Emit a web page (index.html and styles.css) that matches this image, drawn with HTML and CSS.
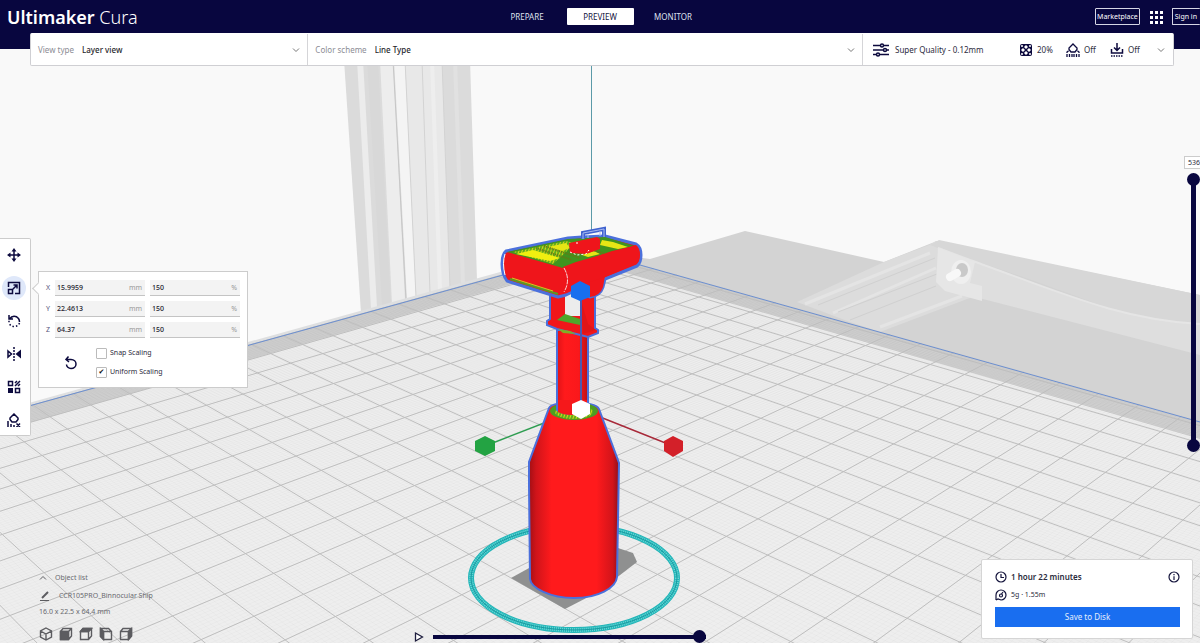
FILE: index.html
```html
<!DOCTYPE html>
<html lang="en">
<head>
<meta charset="utf-8">
<title>Ultimaker Cura</title>
<link rel="stylesheet" href="styles.css">
</head>
<body>
<div class="app">
  <svg class="scene" viewBox="0 0 1200 643" preserveAspectRatio="xMidYMid slice" aria-hidden="true">
    <defs>
      <linearGradient id="bottle" x1="0" x2="1" y1="0" y2="0">
        <stop offset="0" stop-color="#a30f14"/><stop offset=".08" stop-color="#d0141a"/><stop offset=".25" stop-color="#ff1a1c"/>
        <stop offset=".75" stop-color="#ff1a1c"/><stop offset=".93" stop-color="#d2141a"/><stop offset="1" stop-color="#8e0f1c"/>
      </linearGradient>
      <linearGradient id="neck" x1="0" x2="1" y1="0" y2="0">
        <stop offset="0" stop-color="#e01318"/><stop offset=".25" stop-color="#ff1a1c"/><stop offset=".7" stop-color="#fa181b"/><stop offset="1" stop-color="#b81018"/>
      </linearGradient>
      <pattern id="weave" width="3" height="3" patternUnits="userSpaceOnUse" patternTransform="rotate(20)">
        <rect width="3" height="3" fill="#5fae1c"/><rect width="1" height="3" fill="#d6d61c"/>
      </pattern>
    </defs>
    <rect width="1200" height="643" fill="#f9f9f9"/>
    <!-- rear column -->
    <path fill="#dbdbdb" d="M344 60L361 313L477 280L470 60Z"/>
    <path fill="#ececec" d="M357 60L371 309L377 307L363 60Z"/>
    <path fill="#d8d8d8" d="M367 60L382 306L391 304L378 60Z"/>
    <path fill="#ededed" d="M380 60L392 304L405 300L393 60Z"/>
    <path fill="#f4f4f4" d="M394 60L407 300L416 297L405 60Z"/>
    <path fill="#e8e8e8" d="M405 60L416 297L450 288L442 60Z"/>
    <path fill="#eeeeee" d="M430 60L438 291L442 290L434 60Z"/>
    <path fill="#e1e1e1" d="M453 60L461 285L465 284L457 60Z"/>
    <path fill="none" stroke="#c6c6c6" d="M393 60L406 300"/>
    <path fill="none" stroke="#d3d3d3" d="M442 60L450 288M405 60L416 297M422 60L430 293"/>
    <!-- rear base and rail -->
    <path fill="#d3d3d3" d="M590 251L650 259L745 231L884 262L937 241L1200 295V430Z"/>
    <path fill="#dcdcdc" d="M797 302L884 262L929 245L936 241L975 296L880 332L850 322Z"/>
    <path fill="#d7d7d7" d="M930 245L939 240L1200 295V324C1150 320 1130 316 1100 305C1060 290 1000 268 970 260Z"/>
    <path fill="#dedede" d="M938 247L970 260C1060 292 1120 320 1200 324V355L975 297L938 282Z"/>
    <path fill="none" stroke="#e4e4e4" stroke-width="3" d="M805 304L930 253M833 313L936 268M880 327L962 296"/>
    <path fill="none" stroke="#e5e5e5" stroke-width="2" d="M938 248L970 260C1060 292 1120 320 1200 324"/>
    <path fill="none" stroke="#d0d0d0" d="M818 305L935 258M838 312L937 274M850 320L936 286"/>
    <path fill="#e6e6e6" d="M938 248L975 262L970 283L982 286V301L945 291L936 282Z"/>
    <ellipse cx="961" cy="272" rx="10" ry="12" fill="#efefef"/>
    <ellipse cx="962" cy="270" rx="6" ry="7" fill="#c9c9c9"/>
    <path stroke="#f8f8f8" stroke-width="8" stroke-linecap="round" d="M950 277L957 273"/>
    <!-- build plate -->
    <path fill="#dedfe0" d="M0 411L590 247V251L0 415Z"/>
    <path fill="#cfcfcf" d="M0 414L590 251L1200 422V700H0Z"/>
    <path fill="#eeeeee" d="M0 431L588 262L1200 439V700H0Z"/>
    <path id="fine" class="fine"/>
    <path id="grid" class="grid"/>
    <path fill="none" stroke="#6c8fd0" d="M0 414L590 251L1200 422"/>
    <path fill="none" stroke="#5b9aa8" d="M591.500 60V232"/>
    <!-- skirt and shadow -->
    <path fill="#8f9090" d="M511 578L565 609L598 592L637 562L633 553L612 546L540 562Z"/>
    <ellipse cx="574" cy="578" rx="103" ry="52" fill="none" stroke="#22b5b8" stroke-width="6"/>
    <ellipse cx="574" cy="578" rx="103" ry="52" fill="none" stroke="#6ad6d6" stroke-width="4" stroke-dasharray="1 1"/>
    <ellipse cx="574" cy="578" rx="103" ry="52" fill="none" stroke="#189ba0" stroke-width="1"/>
    <!-- axis handles -->
    <path stroke="#2d9d50" stroke-width="1.5" d="M485 446L580 409"/>
    <path stroke="#a82a3a" stroke-width="1.5" d="M673 446L580 409"/>
    <!-- bottle -->
    <path fill="url(#bottle)" stroke="#4b70dc" stroke-width="2" d="M549 408L529 462V485L530 579C531 588 550 598 574 598C598 598 616 588 617 577L619 463L599 409C596 401 552 400 549 408Z"/>
    <ellipse cx="574" cy="411" rx="24" ry="9" fill="#4c9e22"/>
    <ellipse cx="574" cy="412" rx="19" ry="7" fill="url(#weave)"/>
    <path fill="url(#neck)" stroke="#4b70dc" stroke-width="2" d="M557 330V410C563 415 582 415 588 410V330Z"/>
    <path fill="#f5181b" d="M558 400V412C565 416 580 416 587 411V400Z"/>
    <!-- bracket -->
    <path fill="#f0161a" stroke="#4b70dc" stroke-width="2" d="M550 290V319L547 321V325L557 329L588 337L598 333V330L595 328V290Z"/>
    <path fill="#ececec" d="M565 292H580V316H565Z"/>
    <path fill="#4fa62b" d="M557 320L565 314L580 319V325L566 322Z"/>
    <path fill="#7fae25" d="M558 329L570 331L576 334L563 333Z"/>
    <path fill="#c31318" d="M581 300L583 334L596 330L588 324Z" opacity=".35"/>
    <!-- head -->
    <path fill="#ef151b" stroke="#4b70dc" stroke-width="3" stroke-linejoin="round" d="M506 251L568 238L582 237L605 236L636 244Q641 247 641 255Q641 263 637 266L605 279L603 287Q600 296 590 297L577 290L566 295L558 297L507 281Q502 274 502 264Q502 254 506 251Z"/>
    <path fill="#ef151b" d="M577 283L605 276L603 287Q600 296 590 297L577 296Z"/>
    <path fill="#3f941f" d="M507 252L568 239L605 237L635 246L612 251L563 268Z"/>
    <path fill="url(#weave)" d="M513 252L566 241L574 243L566 252L553 264Z"/>
    <path fill="#f0ef10" d="M516 254L533 250L560 258L550 261Z"/>
    <path fill="#e6e615" d="M548 247L566 243L570 248L562 251ZM602 240L613 242L628 247L618 249L600 245ZM582 255L594 251L600 254L588 257Z"/>
    <path fill="none" stroke="#6d7414" stroke-width="2" stroke-dasharray="1 1" d="M536 248L572 260M544 246L580 258M592 250L606 254"/>
    <path fill="#ef151b" d="M569 243L597 237L600 239V249L586 254L570 253Z"/>
    <path fill="#ef151b" d="M563 267L576 262L636 245Q640 248 640 255Q640 262 636 264L605 277L566 290Z"/>
    <path fill="none" stroke="#fff" stroke-dasharray="2 2" d="M570 252L577 255L586 254L589 250M577 242V245"/>
    <path fill="none" stroke="#fff" d="M505 254Q502 263 505 275"/>
    <path fill="none" stroke="#f6dada" stroke-dasharray="5 1" d="M564 268Q571 280 564 292"/>
    <path fill="none" stroke="#5a9b22" stroke-width="2" d="M510 279L558 294"/>
    <path fill="none" stroke="#d0c81e" d="M512 278L553 291"/>
    <path fill="none" stroke="#3f62cf" stroke-width="4" d="M583 239V233L604 229V237"/>
    <path fill="none" stroke="#a9b9ef" d="M583 239V233L604 229V237M588 238V234M600 236V231"/>
    <path stroke="#4c58b0" stroke-width="2" d="M581 292V405"/>
    <path fill="#186fee" d="M580 281L590 286V297L580 301L571 297V286Z"/>
    <path fill="#fff" d="M581 400L590 404V414L581 419L572 414V404Z"/>
    <path fill="#23a343" d="M485 436L495 441V451L485 456L475 451V441Z"/>
    <path fill="#d32029" d="M673 436L683 441V451L673 457L664 451V441Z"/>
  </svg>

  <header class="top">
    <div class="titlebar">
      <h1 class="brand">Ultimaker <span>Cura</span></h1>
      <nav class="stages">
        <button class="stage">PREPARE</button>
        <button class="stage stage-on" aria-current="page">PREVIEW</button>
        <button class="stage">MONITOR</button>
      </nav>
      <div class="account">
        <button class="outline">Marketplace</button>
        <button class="apps" aria-label="Applications">
          <svg width="14" height="14" viewBox="0 0 14 14" fill="#fff"><path d="M1 1h3v3H1zM6 1h3v3H6zM11 1h3v3h-3zM1 6h3v3H1zM6 6h3v3H6zM11 6h3v3h-3zM1 11h3v3H1zM6 11h3v3H6zM11 11h3v3h-3z"/></svg>
        </button>
        <button class="outline signin">Sign in</button>
      </div>
    </div>
    <div class="bar">
      <div class="field">
        <label for="view">View type</label>
        <select id="view"><option>Layer view</option></select>
        <svg class="chev" viewBox="0 0 8 6"><path d="M1 1.500L4 4.500L7 1.500"/></svg>
      </div>
      <div class="field">
        <label for="scheme">Color scheme</label>
        <select id="scheme"><option>Line Type</option></select>
        <svg class="chev" viewBox="0 0 8 6"><path d="M1 1.500L4 4.500L7 1.500"/></svg>
      </div>
      <button class="settings">
        <svg width="18" height="14" viewBox="0 0 18 14" fill="none" stroke="#0c0a3e" stroke-width="1.500"><path d="M1 2.500h7M12 2.500h5M1 7h10M15 7h2M1 11.500h3M8 11.500h9"/><circle cx="10" cy="2.500" r="1.500"/><circle cx="13" cy="7" r="1.500"/><circle cx="6" cy="11.500" r="1.500"/></svg>
        <span class="profile">Super Quality - 0.12mm</span>
        <svg width="14" height="14" viewBox="0 0 14 14"><rect x="1" y="1" width="12" height="12" rx="2" fill="#0c0a3e"/><g fill="#fff"><path d="M7 2L9 4L7 6L5 4ZM7 8L9 10L7 12L5 10ZM4 5L6 7L4 9L2 7ZM10 5L12 7L10 9L8 7Z"/><circle cx="3" cy="3" r="1"/><circle cx="11" cy="3" r="1"/><circle cx="3" cy="11" r="1"/><circle cx="11" cy="11" r="1"/></g></svg>
        <span class="value">20%</span>
        <svg width="14" height="14" viewBox="0 0 14 14" fill="none" stroke="#0c0a3e" stroke-width="1.300"><path d="M7 1L11 5V6.500L9 9H5L3 6.500V5Z"/><path d="M1 14V9L3 7.500M13 14V9L11 7.500M3.500 14V10M6 14V11M8 14V11M10.500 14V10" stroke-dasharray="3 1"/></svg>
        <span class="value value-short">Off</span>
        <svg width="14" height="14" viewBox="0 0 14 14" fill="none" stroke="#0c0a3e" stroke-width="1.500"><path d="M7 0V7M4 4.500L7 7.500L10 4.500M1.500 6V10H12.500V6"/><path d="M1 13H13" stroke-dasharray="1.500 1"/></svg>
        <span class="value">Off</span>
        <svg class="chev" viewBox="0 0 8 6"><path d="M1 1.500L4 4.500L7 1.500"/></svg>
      </button>
    </div>
  </header>

  <main class="work">
    <section class="left">
      <div class="tools" role="toolbar" aria-label="Tools">
        <button class="tool" aria-label="Move"><svg viewBox="0 0 14 14"><path d="M7 2V12M2 7H12"/><path class="solid" d="M7 0L9.500 3.500H4.500ZM7 14L9.500 10.500H4.500ZM0 7L3.500 4.500V9.500ZM14 7L10.500 4.500V9.500Z"/></svg></button>
        <button class="tool tool-on" aria-label="Scale"><svg viewBox="0 0 14 14"><path d="M1.500 6V1.500H12.500V12.500H8M1.500 8.500H5.500V12.500H1.500ZM6 8L10 4M6.500 4H10V7.500"/></svg></button>
        <button class="tool" aria-label="Rotate"><svg viewBox="0 0 14 14"><path d="M2 1V5H6M2.500 5C5 1.500 9 1.500 11.500 4.500C12.500 6 12.500 7 12.500 8"/><path stroke-dasharray="1.500 2" d="M12.500 9C11 13.500 4 14 2 9V6"/></svg></button>
        <button class="tool" aria-label="Mirror"><svg viewBox="0 0 14 14"><path stroke-dasharray="2 1" d="M7 0V14"/><path d="M1 4L4.500 7L1 10Z"/><path class="solid" d="M14 2.500V11.500L8.500 7Z"/></svg></button>
        <button class="tool" aria-label="Per model settings"><svg viewBox="0 0 14 14"><path d="M1.500 1.500H5.500V5.500H1.500ZM8.500 8.500H12.500V12.500H8.500ZM8 3L10 1M8 6L13 1M11 6L13 4"/><path class="solid" d="M1 8H6V13H1Z"/></svg></button>
        <button class="tool" aria-label="Support blocker"><svg viewBox="0 0 14 14"><path d="M7 1L11 5V6.500L9 9H5L3 6.500V5ZM1 8V14M4 11V14M7 12V14M9.500 10.500L13 14M13 10.500L9.500 14"/></svg></button>
      </div>
      <form class="scale">
        <div class="axes">
          <label for="x">X</label><span class="num"><input id="x" value="15.9959"><i>mm</i></span><span class="num"><input aria-label="X percent" value="150"><i>%</i></span>
          <label for="y">Y</label><span class="num"><input id="y" value="22.4613"><i>mm</i></span><span class="num"><input aria-label="Y percent" value="150"><i>%</i></span>
          <label for="z">Z</label><span class="num"><input id="z" value="64.37"><i>mm</i></span><span class="num"><input aria-label="Z percent" value="150"><i>%</i></span>
        </div>
        <div class="options">
          <button type="button" class="reset" aria-label="Reset"><svg width="14" height="14" viewBox="0 0 14 14" fill="none" stroke="#0c0a3e" stroke-width="1.500"><path d="M4.500 0.500L2 3.500L5 6M2.500 3.500H7C10 3.500 12 5.500 12 8C12 10.500 10 12.500 7 12.500C4.500 12.500 2.500 10.500 2.500 8.500"/></svg></button>
          <div class="checks">
            <label><input type="checkbox">Snap Scaling</label>
            <label><input type="checkbox" checked>Uniform Scaling</label>
          </div>
        </div>
      </form>
    </section>

    <aside class="layers">
      <output class="layer-no">536</output>
      <div class="vrange">
        <input type="range" min="0" max="536" value="536" aria-label="Top layer">
        <input type="range" min="0" max="536" value="0" aria-label="Bottom layer">
      </div>
    </aside>

    <section class="objects">
      <button class="listhead"><svg width="8" height="6" viewBox="0 0 8 6"><path d="M1 4.500L4 1.500L7 4.500"/></svg>Object list</button>
      <div class="object"><svg width="12" height="10" viewBox="0 0 12 10"><path d="M1 9.500H10"/><path d="M3 7L9 1" stroke-width="2"/></svg><span>CCR105PRO_Binnocular Ship</span></div>
      <p class="dims">16.0 x 22.5 x 64.4 mm</p>
      <div class="cubes">
        <button aria-label="3D view"><svg viewBox="0 0 14 14"><path d="M7 1L12.500 4V10L7 13L1.500 10V4ZM1.500 4L7 7L12.500 4M7 7V13"/></svg></button>
        <button aria-label="Front view"><svg viewBox="0 0 14 14"><path d="M1.500 4.500L4 1.500H12.500V9L9.500 12.500H1.500ZM1.500 4.500H9.500V12.500M9.500 4.500L12.500 1.500"/><path class="face" d="M1.500 4.500H9.500V12.500H1.500Z"/></svg></button>
        <button aria-label="Top view"><svg viewBox="0 0 14 14"><path d="M1.500 4.500L4 1.500H12.500V9L9.500 12.500H1.500ZM1.500 4.500H9.500V12.500M9.500 4.500L12.500 1.500"/><path class="face" d="M1.500 4.500L4 1.500H12.500L9.500 4.500Z"/></svg></button>
        <button aria-label="Left view"><svg viewBox="0 0 14 14"><path d="M1.500 1.500H9.500L12.500 4.500V12.500H4.500L1.500 9.500ZM1.500 1.500L4.500 4.500H12.500M4.500 4.500V12.500"/><path class="face" d="M1.500 1.500L4.500 4.500V12.500L1.500 9.500Z"/></svg></button>
        <button aria-label="Right view"><svg viewBox="0 0 14 14"><path d="M1.500 4.500L4 1.500H12.500V9L9.500 12.500H1.500ZM1.500 4.500H9.500V12.500M9.500 4.500L12.500 1.500"/><path class="face" d="M9.500 4.500L12.500 1.500V9L9.500 12.500Z"/></svg></button>
      </div>
    </section>

    <div class="play">
      <button aria-label="Play"><svg width="10" height="12" viewBox="0 0 10 12"><path d="M1.500 2L8.500 6L1.500 10Z" fill="#fff" stroke="#1d1d3d" stroke-width="1.300"/></svg></button>
      <input type="range" min="0" max="100" value="100" aria-label="Path position">
    </div>

    <section class="card">
      <div class="row">
        <svg width="12" height="12" viewBox="0 0 12 12"><circle cx="6" cy="6" r="5"/><path d="M6 3V6.500H9"/></svg>
        <strong>1 hour 22 minutes</strong>
        <button class="info" aria-label="Details"><svg width="12" height="12" viewBox="0 0 12 12"><circle cx="6" cy="6" r="5"/><path d="M6 3V4.200M6 5.200V9"/></svg></button>
      </div>
      <div class="row">
        <svg width="12" height="12" viewBox="0 0 12 12"><path d="M1 11V6A5 5 0 1 1 6 11L3 10L1 11"/><circle cx="6" cy="6.500" r="1.500"/><path d="M6.500 5L8 3"/></svg>
        <span>5g · 1.55m</span>
      </div>
      <button class="save">Save to Disk</button>
    </section>
  </main>
</div>
<script src="grid.js"></script>
</body>
</html>
```
FILE: styles.css
```css
* { box-sizing: border-box; }
body { margin: 0; font-family: "Noto Sans", "Open Sans", sans-serif; font-size: 8px; line-height: 12px; color: #2b2b3d; }
button, input, select { font: inherit; color: inherit; background: none; border: 0; padding: 0; margin: 0; }
button { cursor: pointer; }
svg { display: block; flex: none; }
.app { position: relative; min-height: 100vh; display: flex; flex-direction: column; overflow: hidden; }
.scene { position: absolute; inset: 0; width: 100%; height: 100%; }
.grid { fill: none; stroke: #bebebe; stroke-width: 1; }
.fine { fill: none; stroke: #000; stroke-opacity: .02; }

.top { position: relative; background: linear-gradient(#08063f 49px, transparent 49px); }
.titlebar { display: grid; grid-template-columns: 1fr auto 1fr; align-items: center; height: 33px; padding-left: 7px; color: #fff; }
.brand { margin: 0; font-size: 18px; line-height: 24px; font-weight: 600; }
.brand span { font-weight: 300; }
.stages { display: flex; gap: 6px; margin-left: -7px; }
.stage { width: 67px; height: 17px; border-radius: 1px; color: #dfe0ee; }
.stage-on { background: #fff; color: #16163f; }
.account { display: flex; justify-content: flex-end; align-items: center; gap: 9px; }
.outline { height: 17px; padding: 0 1px; border: 1px solid #d5d5e4; border-radius: 1px; font-size: 7px; }
.signin { padding: 0 3px 0 2px; border-right: 0; }

.bar { display: grid; grid-template-columns: 1fr 2fr 310px; height: 33px; margin: 0 26px 0 30px; background: #fff; border: 1px solid #cfcfd3; border-top-color: #fff; border-radius: 2px; }
.field { display: flex; align-items: center; gap: 8px; padding: 0 7px; border-right: 1px solid #d5d5d8; }
.field label { color: #8c8c94; }
.field select { flex: 1; appearance: none; font-weight: 500; color: #1f1f2c; }
.chev { width: 8px; height: 6px; fill: none; stroke: #777; }
.settings { display: flex; align-items: center; padding: 0 8px 0 9px; text-align: left; }
.profile { flex: 1; margin-left: 5px; }
.value { width: 29px; margin-left: 4px; }
.value-short { width: 26px; }

.work { position: relative; flex: 1; display: grid; grid-template-columns: 1fr auto 1fr; grid-template-rows: 1fr auto; }
.left { grid-column: 1 / 3; display: flex; align-items: flex-start; gap: 7px; padding-top: 172px; }
.tools { display: flex; flex-direction: column; gap: 9px; padding: 4px 4px 3px 2px; background: #fff; border: 1px solid #ccc; border-left: 0; border-radius: 0 2px 2px 0; }
.tool { display: grid; place-items: center; width: 24px; height: 24px; border-radius: 50%; }
.tool svg { width: 14px; height: 14px; fill: none; stroke: #0c0a3e; stroke-width: 1.5; }
.tool .solid { fill: #0c0a3e; stroke: none; }
.tool-on { background: #dfe8fa; }
.scale { position: relative; width: 210px; margin-top: 33px; padding: 8px 7px; background: #fff; border: 1px solid #ccc; font-size: 7px; }
.scale::before { content: ""; position: absolute; left: -5px; top: 12px; width: 8px; height: 8px; background: #fff; border: 1px solid #ccc; border-width: 0 0 1px 1px; transform: rotate(45deg); }
.axes { display: grid; grid-template-columns: 4px minmax(0, 1fr) minmax(0, 1fr); gap: 5px; align-items: center; color: #55557a; }
.num { display: flex; align-items: center; height: 16px; padding: 0 3px 0 2px; background: #f3f3f3; border-bottom: 1px solid #c4c4c4; }
.num input { flex: 1; width: 0; min-width: 0; font-weight: 500; color: #22222e; }
.num i { font-style: normal; color: #999; }
.options { display: flex; align-items: center; gap: 18px; padding: 9px 0 1px 18px; }
.checks { display: flex; flex-direction: column; gap: 7px; }
.checks label { display: flex; align-items: center; gap: 3px; }
.checks input { appearance: none; width: 11px; height: 11px; border: 1px solid #bbb; border-radius: 1px; display: grid; place-items: center; }
.checks input:checked::after { content: "✔"; font: 7px/9px "DejaVu Sans", sans-serif; color: #111; }

.layers { display: flex; flex-direction: column; align-items: flex-end; gap: 4px; padding-top: 90px; }
.layer-no { padding: 0 0 0 3px; background: #fff; border: 1px solid #ccc; border-right: 0; font-size: 7px; line-height: 11px; }
.vrange { display: grid; width: 13px; height: 279px; background: linear-gradient(#08063f, #08063f) center / 5px 267px no-repeat; }
.vrange input { grid-area: 1 / 1; writing-mode: vertical-lr; direction: rtl; width: 13px; height: 279px; appearance: none; pointer-events: none; }
input[type="range"]::-webkit-slider-thumb { appearance: none; width: 13px; height: 13px; border-radius: 50%; background: #08063f; pointer-events: auto; }

.objects { align-self: end; padding: 0 0 2px 39px; font-size: 7px; color: #6a6a70; }
.objects svg { fill: none; stroke: #5c5c60; stroke-width: 1; }
.listhead { display: flex; align-items: center; gap: 8px; height: 12px; }
.object { display: flex; align-items: center; gap: 8px; margin-top: 6px; }
.dims { margin: 4px 0 9px; }
.cubes { display: flex; gap: 6px; }
.cubes svg { width: 14px; height: 14px; stroke-width: 1.4; }
.cubes .face { fill: #5c5c60; }

.play { align-self: end; display: flex; align-items: center; gap: 9px; margin-right: 80px; }
.play input { appearance: none; width: 273px; height: 13px; background: linear-gradient(#08063f, #08063f) center / 100% 4px no-repeat; }

.card { justify-self: end; align-self: end; width: 212px; margin: 0 7px 4px 0; padding: 11px 12px 11px 13px; background: #fff; border: 1px solid #d5d5d5; border-radius: 2px; }
.card svg { fill: none; stroke: #14143c; stroke-width: 1.2; }
.row { display: flex; align-items: center; gap: 4px; height: 12px; margin-bottom: 6px; }
.row strong { font-weight: 600; }
.row span { font-size: 7px; }
.info { margin-left: auto; }
.save { display: block; width: 100%; height: 20px; background: #196ef0; color: #e5eefc; }
```
FILE: grid.js
```js
// Projects the build plate's square grid onto the scene.
// Each vector is homogeneous: the plate's far corner, then one cell along each edge.
const O = [590, 250.6, 1];
const U = [11.065, 1.76, -0.01567];
const V = [-29.445, 1.739, -0.0155];

function point(u, v) {
  const [x, y, w] = O.map((o, i) => o + u * U[i] + v * V[i]);
  return (x / w).toFixed(1) + " " + (y / w).toFixed(1);
}

function lines(step, offset) {
  let d = "";
  for (let t = 0; t < 50; t += step) {
    const vEnd = (0.92 + t * U[2]) / -V[2];
    if (vEnd > 0) d += "M" + point(t, 0) + "L" + point(t, vEnd);
    const v = t + offset;
    const uEnd = (0.92 + v * V[2]) / -U[2];
    if (uEnd > 0) d += "M" + point(0, v) + "L" + point(uEnd, v);
  }
  return d;
}

document.getElementById("grid").setAttribute("d", lines(1, 0.25));
document.getElementById("fine").setAttribute("d", lines(0.1, 0));
```
